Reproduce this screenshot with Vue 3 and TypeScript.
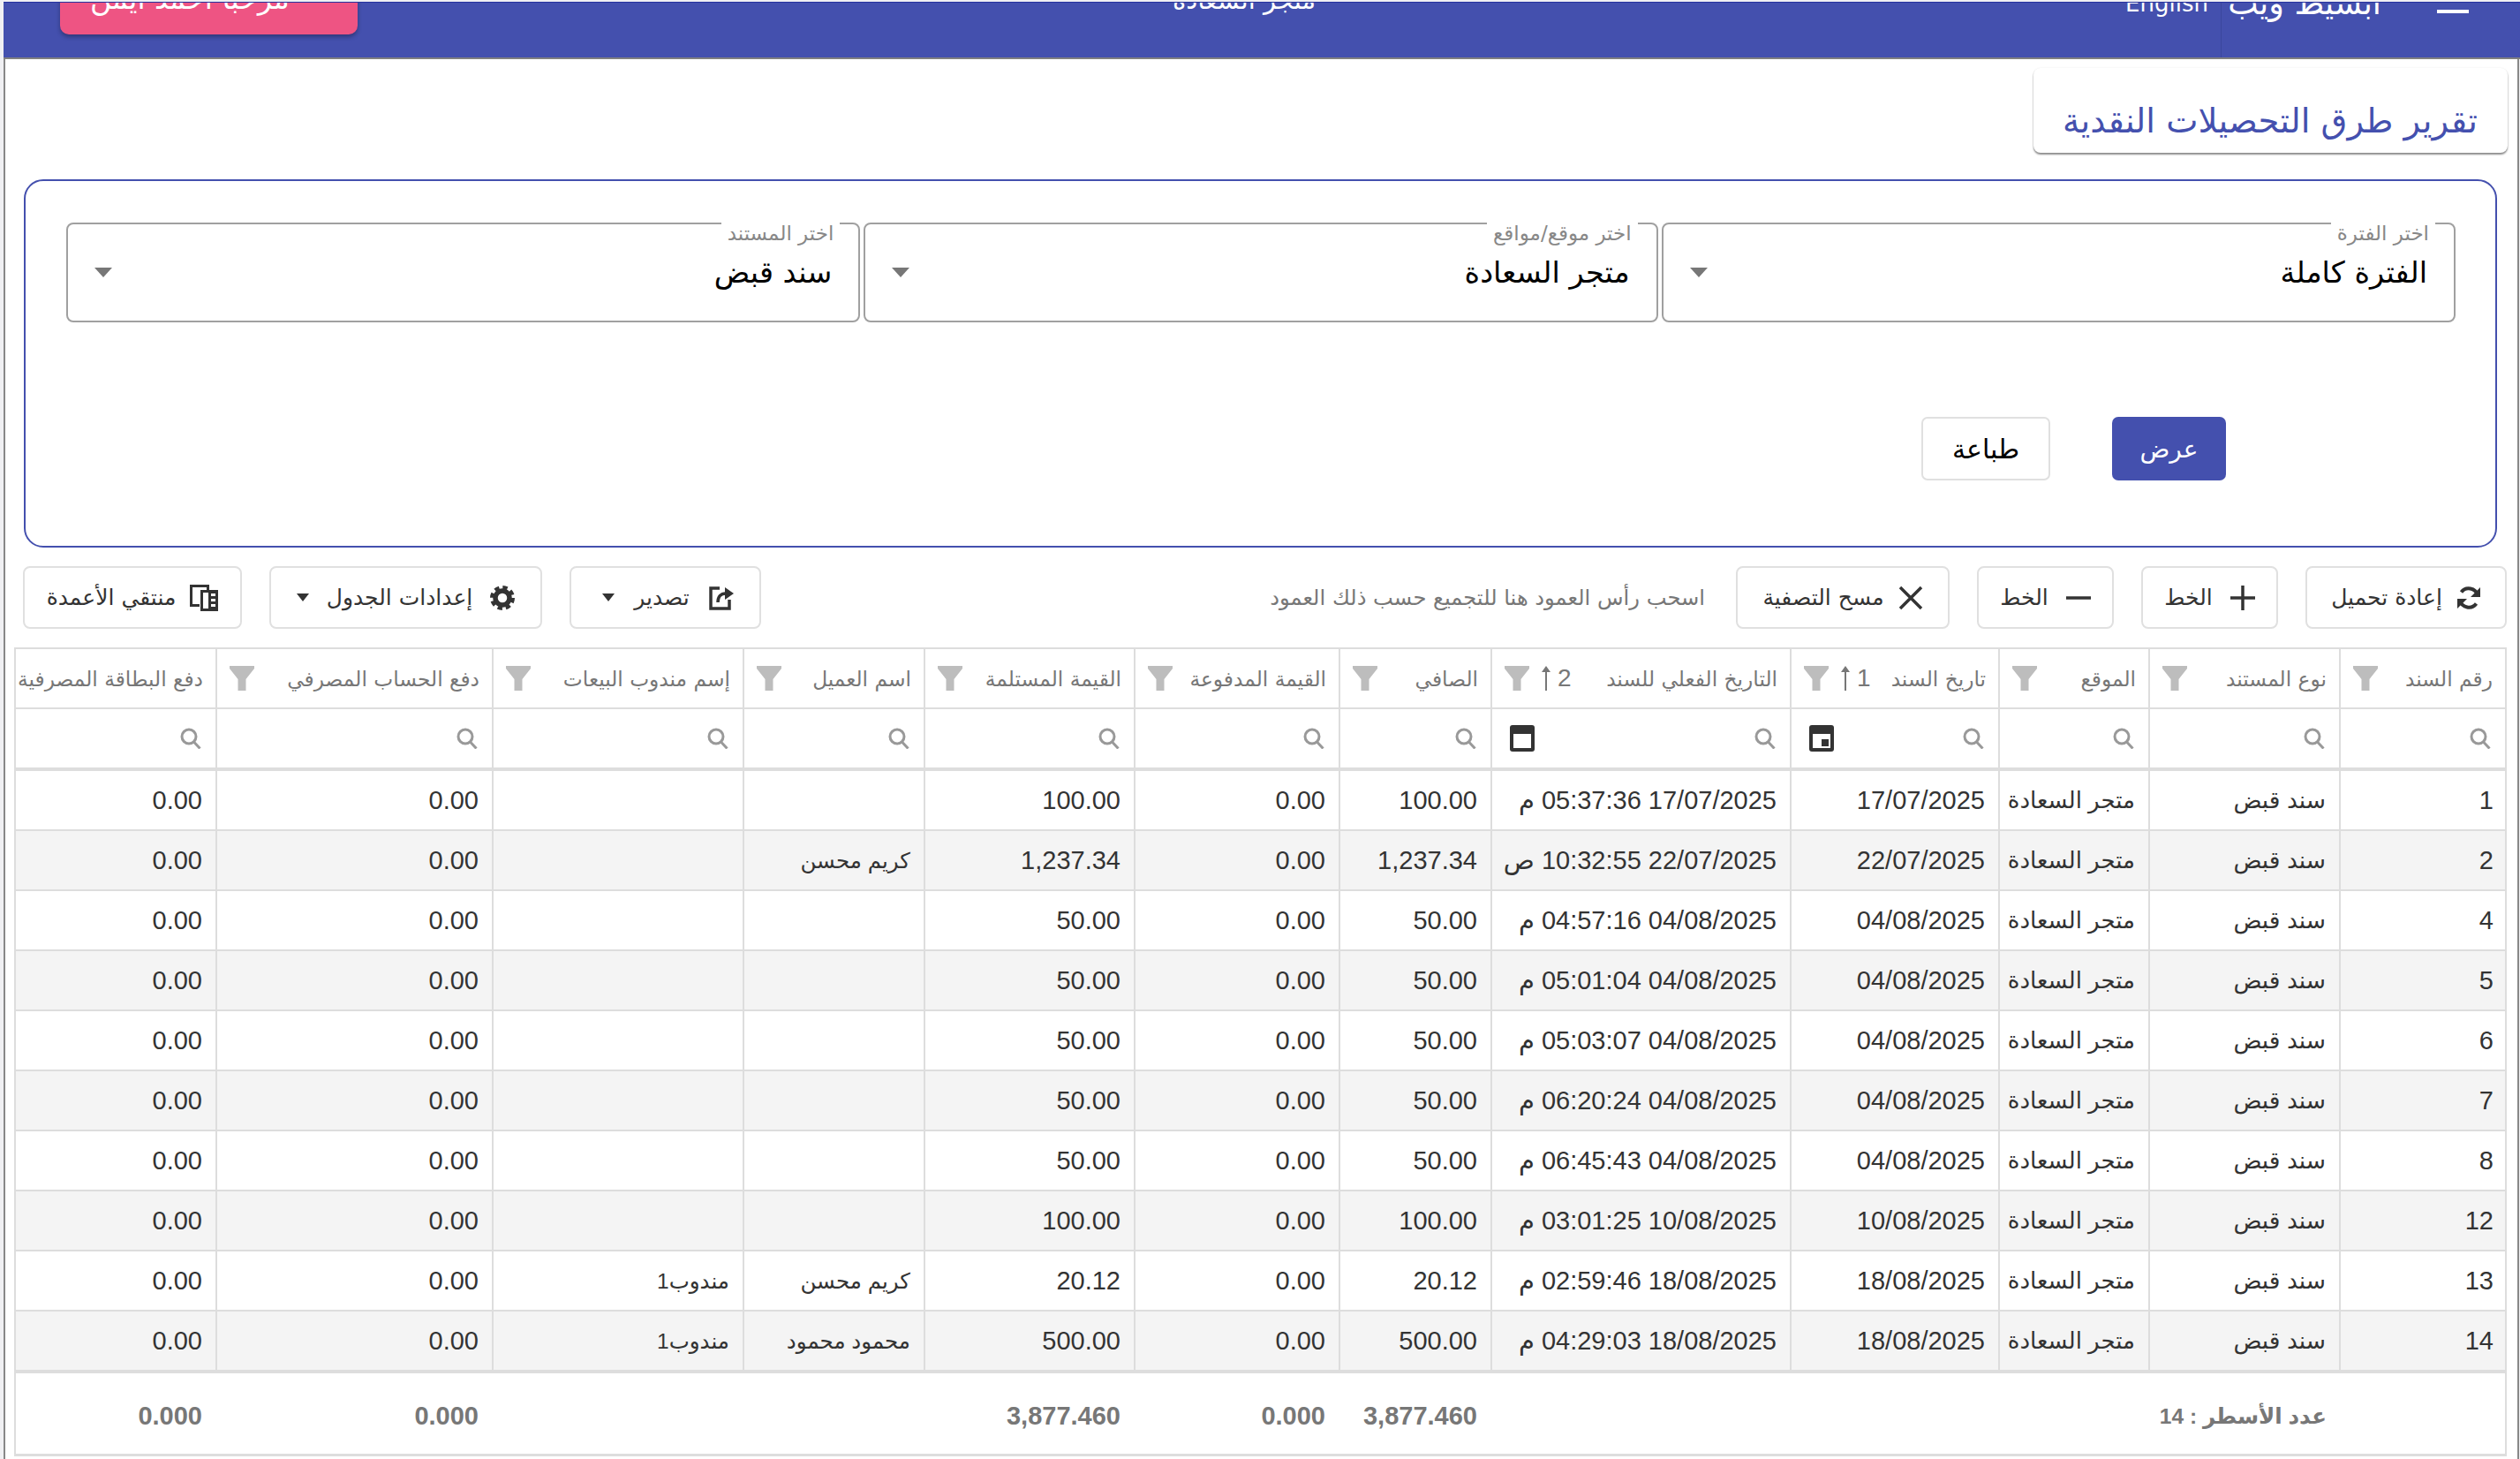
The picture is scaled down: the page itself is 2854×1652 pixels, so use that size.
<template>
  <div class="page">
    <header class="topbar">
      <div class="topbar-inner">
        <div class="burger"><span></span><span></span><span></span></div>
        <div class="brand">ابسيط ويب</div>
        <div class="top-divider"></div>
        <div class="lang">English</div>
        <div class="store">متجر السعادة</div>
        <button class="user-btn">
          <span>مرحبا احمد ايمن</span>
          <i class="user-caret"></i>
        </button>
      </div>
    </header>

    <main class="content">
      <div class="title-card">تقرير طرق التحصيلات النقدية</div>

      <section class="filter-panel">
        <div class="fields">
          <div class="field" v-for="f in fields" :key="f.label">
            <label class="field-label">{{ f.label }}</label>
            <span class="field-value">{{ f.value }}</span>
            <i class="field-caret"></i>
          </div>
        </div>
        <div class="panel-actions">
          <button class="btn-primary">عرض</button>
          <button class="btn-outline">طباعة</button>
        </div>
      </section>

      <div class="toolbar">
        <button class="tool-btn w-reload">
          <svg width="28" height="28" viewBox="0 0 28 28"><path d="M24 11A10.500 10.500 0 0 0 5.500 7.500" fill="none" stroke="#333" stroke-width="4"/><path d="M4 17A10.500 10.500 0 0 0 22.500 20.500" fill="none" stroke="#333" stroke-width="4"/><path d="M27 2V13H16ZM1 26V15H12Z" fill="#333"/></svg>
          <span>إعادة تحميل</span>
        </button>
        <button class="tool-btn w-line">
          <svg width="28" height="28" viewBox="0 0 28 28"><path d="M14 0V28M0 14H28" stroke="#333" stroke-width="3.500"/></svg>
          <span>الخط</span>
        </button>
        <button class="tool-btn w-line">
          <svg width="28" height="28" viewBox="0 0 28 28"><path d="M0 14H28" stroke="#333" stroke-width="3.500"/></svg>
          <span>الخط</span>
        </button>
        <button class="tool-btn w-clear">
          <svg width="28" height="28" viewBox="0 0 28 28"><path d="M2 2L26 26M26 2L2 26" stroke="#333" stroke-width="3.500"/></svg>
          <span>مسح التصفية</span>
        </button>
        <div class="group-hint">اسحب رأس العمود هنا للتجميع حسب ذلك العمود</div>
        <button class="tool-btn w-export">
          <svg width="28" height="28" viewBox="0 0 28 28"><path d="M12 3H2V26H23V16" fill="none" stroke="#333" stroke-width="3.500"/><path d="M10 19C10 13 13 9 19 9" fill="none" stroke="#333" stroke-width="3.500"/><path d="M18 2L28 9L18 16Z" fill="#333"/></svg>
          <span>تصدير</span>
          <i class="tool-caret"></i>
        </button>
        <button class="tool-btn w-settings">
          <svg width="28" height="28" viewBox="0 0 28 28"><circle cx="14" cy="14" r="8" fill="none" stroke="#333" stroke-width="5.500"/><circle cx="14" cy="14" r="12" fill="none" stroke="#333" stroke-width="4" stroke-dasharray="5.420 4"/></svg>
          <span>إعدادات الجدول</span>
          <i class="tool-caret"></i>
        </button>
        <button class="tool-btn w-columns">
          <svg width="32" height="30" viewBox="0 0 32 30"><path d="M0 0H22V6H19V3H3V22H11V25H0Z" fill="#333"/><path d="M12 6H32V30H12Z" fill="#333"/><path d="M15 9H21V27H15ZM24 10H29V13H24ZM24 16H29V19H24ZM24 22H29V25H24Z" fill="#fff"/></svg>
          <span>منتقي الأعمدة</span>
        </button>
      </div>

      <div class="grid-wrap">
        <table class="grid">
          <colgroup>
            <col v-for="c in columns" :key="c.title" :class="c.key" />
          </colgroup>
          <thead>
            <tr class="head-row">
              <th v-for="c in columns" :key="c.title">
                <div class="head-cell">
                  <span class="head-title">{{ c.title }}</span>
                  <span class="head-sort" v-if="c.sort">
                    <span>{{ c.sort }}</span>
                    <svg width="10" height="28" viewBox="0 0 10 28"><path d="M5 0L10 7H6V28H4V7H0Z" fill="#777"/></svg>
                  </span>
                  <svg class="funnel" width="28" height="28" viewBox="0 0 28 28"><path d="M0 0H28V3L18.500 15V28H9.500V15L0 3Z" fill="#bdbdbd"/></svg>
                </div>
              </th>
            </tr>
            <tr class="filter-row">
              <th v-for="c in columns" :key="c.title">
                <div class="filter-cell">
                  <svg width="24" height="24" viewBox="0 0 24 24"><circle cx="10" cy="10" r="8" fill="none" stroke="#999" stroke-width="3"/><path d="M15.500 16L22.500 23.500" stroke="#999" stroke-width="3"/></svg>
                  <svg v-if="c.calendar" class="calendar" width="28" height="30" viewBox="0 0 28 30">
                    <path d="M3 0H25Q28 0 28 3V27Q28 30 25 30H3Q0 30 0 27V3Q0 0 3 0Z" fill="#333"/>
                    <path d="M4 10H24V26H4Z" fill="#fff"/>
                    <path v-if="c.calendar === 'day'" d="M14 16H22V24H14Z" fill="#333"/>
                  </svg>
                </div>
              </th>
            </tr>
          </thead>
          <tbody>
            <tr v-for="r in rows" :key="r.id" class="data-row">
              <td class="first">{{ r.id }}</td>
              <td class="ar-doc">سند قبض</td>
              <td class="ar-loc">متجر السعادة</td>
              <td>{{ r.date }}</td>
              <td>{{ r.date }} {{ r.time }}</td>
              <td>{{ r.net }}</td>
              <td>0.00</td>
              <td>{{ r.net }}</td>
              <td class="ar-name">{{ r.customer }}</td>
              <td class="ar-name">{{ r.agent }}</td>
              <td>0.00</td>
              <td>0.00</td>
            </tr>
          </tbody>
          <tfoot>
            <tr class="foot-row">
              <td></td>
              <td colspan="4" class="foot-count">عدد الأسطر : 14</td>
              <td>3,877.460</td>
              <td>0.000</td>
              <td>3,877.460</td>
              <td></td>
              <td></td>
              <td>0.000</td>
              <td>0.000</td>
            </tr>
          </tfoot>
        </table>
      </div>
    </main>
  </div>
</template>

<script setup lang="ts">
interface Column {
  key: string
  title: string
  sort?: number
  calendar?: 'day' | 'blank'
}

interface Row {
  id: number
  date: string
  time: string
  net: string
  customer: string
  agent: string
}

const fields = [
  { label: 'اختر الفترة', value: 'الفترة كاملة' },
  { label: 'اختر موقع/مواقع', value: 'متجر السعادة' },
  { label: 'اختر المستند', value: 'سند قبض' }
]

const columns: Column[] = [
  { key: 'c1', title: 'رقم السند' },
  { key: 'c2', title: 'نوع المستند' },
  { key: 'c3', title: 'الموقع' },
  { key: 'c4', title: 'تاريخ السند', sort: 1, calendar: 'day' },
  { key: 'c5', title: 'التاريخ الفعلي للسند', sort: 2, calendar: 'blank' },
  { key: 'c6', title: 'الصافي' },
  { key: 'c7', title: 'القيمة المدفوعة' },
  { key: 'c8', title: 'القيمة المستلمة' },
  { key: 'c9', title: 'اسم العميل' },
  { key: 'c10', title: 'إسم مندوب البيعات' },
  { key: 'c11', title: 'دفع الحساب المصرفي' },
  { key: 'c12', title: 'دفع البطاقة المصرفية' }
]

const rows: Row[] = [
  { id: 1, date: '17/07/2025', time: '05:37:36 م', net: '100.00', customer: '', agent: '' },
  { id: 2, date: '22/07/2025', time: '10:32:55 ص', net: '1,237.34', customer: 'كريم محسن', agent: '' },
  { id: 4, date: '04/08/2025', time: '04:57:16 م', net: '50.00', customer: '', agent: '' },
  { id: 5, date: '04/08/2025', time: '05:01:04 م', net: '50.00', customer: '', agent: '' },
  { id: 6, date: '04/08/2025', time: '05:03:07 م', net: '50.00', customer: '', agent: '' },
  { id: 7, date: '04/08/2025', time: '06:20:24 م', net: '50.00', customer: '', agent: '' },
  { id: 8, date: '04/08/2025', time: '06:45:43 م', net: '50.00', customer: '', agent: '' },
  { id: 12, date: '10/08/2025', time: '03:01:25 م', net: '100.00', customer: '', agent: '' },
  { id: 13, date: '18/08/2025', time: '02:59:46 م', net: '20.12', customer: 'كريم محسن', agent: 'مندوب1' },
  { id: 14, date: '18/08/2025', time: '04:29:03 م', net: '500.00', customer: 'محمود محمود', agent: 'مندوب1' }
]
</script>

<style>
html,
body {
  margin: 0;
  background: #fff;
  overflow: hidden;
}
</style>

<style scoped>
.page {
  width: 2854px;
  height: 1652px;
  overflow: hidden;
  direction: rtl;
  background: #f0f0f3;
  font-family: "Liberation Sans", "DejaVu Sans", sans-serif;
  color: #333;
}

.topbar {
  height: 62px;
  margin-left: 4px;
  margin-top: 2px;
  background: #4450ae;
  border-top: 1px solid #2632a0;
  border-bottom: 2px solid #808080;
  overflow: hidden;
  color: #fff;
  font-family: "DejaVu Sans", sans-serif;
}

.topbar-inner {
  display: flex;
  align-items: stretch;
  height: 92px;
  margin-top: -30px;
}

.burger {
  display: flex;
  flex-direction: column;
  gap: 10px;
  width: 36px;
  margin-right: 58px;
  justify-content: flex-end;
  padding-bottom: 50px;
}

.burger span {
  height: 4px;
  background: #fff;
}

.brand {
  margin-right: 63px;
  width: 168px;
  font-size: 36.500px;
  line-height: 62px;
  white-space: nowrap;
}

.top-divider {
  width: 1px;
  margin-right: 13px;
  background: #3b479c;
}

.lang {
  margin-right: 14px;
  width: 90px;
  font-size: 26px;
  line-height: 62px;
}

.store {
  margin-right: 921px;
  width: 164px;
  font-size: 29px;
  line-height: 54px;
  white-space: nowrap;
}

.user-btn {
  display: flex;
  justify-content: space-between;
  width: 337px;
  height: 66px;
  margin-right: auto;
  margin-left: 64px;
  padding: 6px 36px 0 34px;
  border: 0;
  border-radius: 0 0 10px 10px;
  background: #ee5483;
  box-shadow: 0 3px 5px rgba(0, 0, 0, 0.3);
  color: #fff;
  font: 33px "DejaVu Sans", sans-serif;
  direction: ltr;
}

.user-btn span {
  direction: rtl;
  white-space: nowrap;
}

.user-caret {
  width: 0;
  height: 0;
  margin-top: 15px;
  border: 7px solid transparent;
  border-top: 9px solid #fff;
}

.content {
  height: 1586px;
  margin: 0 1px 0 4px;
  border-left: 2px solid #888;
  border-right: 2px solid #888;
  background: #fff;
  overflow: hidden;
}

.title-card {
  width: 537px;
  height: 96px;
  box-sizing: border-box;
  margin: 10px 11px 0 0;
  padding: 36px 34px 0 0;
  border-radius: 8px;
  background: #fff;
  box-shadow: 0 2px 2px rgba(0, 0, 0, 0.45), 0 0 2px rgba(0, 0, 0, 0.08);
  color: #4450ae;
  font: 38.5px/48px "DejaVu Sans", sans-serif;
  white-space: nowrap;
}

.filter-panel {
  height: 417px;
  box-sizing: border-box;
  margin: 30px 23px 0 21px;
  padding: 47px 45px 0 46px;
  border: 2px solid #4450ae;
  border-radius: 22px;
}

.fields {
  display: grid;
  grid-template-columns: repeat(3, 1fr);
  gap: 4px;
}

.field {
  position: relative;
  display: flex;
  align-items: center;
  justify-content: space-between;
  height: 113px;
  box-sizing: border-box;
  padding: 0 30px 0 30px;
  border: 2px solid #a0a0a0;
  border-radius: 8px;
}

.field-label {
  position: absolute;
  top: -3px;
  right: 21px;
  padding: 0 7px;
  background: #fff;
  color: #888;
  font: 23px/27px "DejaVu Sans", sans-serif;
}

.field-value {
  color: #000;
  font: 33.500px/40px "DejaVu Sans", sans-serif;
}

.field-caret {
  width: 0;
  height: 0;
  border-left: 10px solid transparent;
  border-right: 10px solid transparent;
  border-top: 11px solid #777;
}

.panel-actions {
  display: flex;
  gap: 70px;
  margin: 107px 260px 0 0;
}

.panel-actions button {
  height: 72px;
  border-radius: 7px;
  font: 28px "DejaVu Sans", sans-serif;
}

.btn-primary {
  width: 129px;
  border: 0;
  background: #4450ae;
  color: #fff;
}

.panel-actions .btn-outline {
  width: 146px;
  border: 2px solid #e0e0e0;
  background: #fff;
  color: #000;
  font-size: 30px;
}

.toolbar {
  display: flex;
  align-items: center;
  gap: 31px;
  height: 71px;
  margin: 21px 12px 0 20px;
}

.tool-btn {
  display: flex;
  align-items: center;
  justify-content: center;
  gap: 16px;
  height: 71px;
  box-sizing: border-box;
  padding: 0;
  border: 2px solid #e0e0e0;
  border-radius: 8px;
  background: #fff;
  color: #333;
  font: 25px "DejaVu Sans", sans-serif;
  white-space: nowrap;
  flex: none;
}

.w-reload { width: 228px; }
.w-line { width: 155px; gap: 20px; }
.w-clear { width: 242px; }
.w-export { width: 217px; margin-right: auto; gap: 22px; padding-left: 6px; }
.w-settings { width: 309px; gap: 20px; }
.w-columns { width: 248px; }

.group-hint {
  margin-right: 4px;
  color: #777;
  font: 24.2px "DejaVu Sans", sans-serif;
  white-space: nowrap;
}

.tool-caret {
  width: 0;
  height: 0;
  border-left: 7px solid transparent;
  border-right: 7px solid transparent;
  border-top: 9px solid #333;
}

.grid-wrap {
  margin: 21px 12px 0 10px;
}

.grid {
  width: 2823px;
  table-layout: fixed;
  border-collapse: separate;
  border-spacing: 0;
  border-top: 2px solid #ddd;
  border-right: 2px solid #ddd;
  border-left: 2px solid #ddd;
  font-size: 29px;
}

.c1 { width: 188px; }
.c2 { width: 216px; }
.c3 { width: 170px; }
.c4 { width: 236px; }
.c5 { width: 339px; }
.c6 { width: 172px; }
.c7 { width: 232px; }
.c8 { width: 238px; }
.c9 { width: 205px; }
.c10 { width: 284px; }
.c11 { width: 313px; }
.c12 { width: 226px; }

.grid th,
.grid td {
  padding: 0 15px;
  box-sizing: border-box;
  border-left: 2px solid #ddd;
  border-bottom: 2px solid #ddd;
  font-weight: 400;
  text-align: right;
  white-space: nowrap;
  overflow: hidden;
}

.grid th:last-child,
.grid td:last-child {
  border-left: 0;
}

.head-row th {
  height: 68px;
  padding: 0 14px 0 14px;
}

.head-cell {
  display: flex;
  align-items: center;
  gap: 14px;
  color: #777;
  font: 23.300px "DejaVu Sans", sans-serif;
}

.head-title {
  white-space: nowrap;
}

.head-sort {
  display: flex;
  align-items: center;
  gap: 8px;
  margin-right: auto;
  font: 28px "Liberation Sans", sans-serif;
}

.funnel {
  flex: none;
  margin-right: auto;
}

.head-sort + .funnel {
  margin-right: 0;
}

.filter-row th {
  height: 70px;
  border-bottom-width: 4px;
  padding: 0 16px 0 20px;
}

.filter-cell {
  display: flex;
  align-items: center;
  justify-content: space-between;
}

.data-row td {
  height: 68px;
  color: #333;
}

.data-row:nth-child(even) td {
  background: #f4f4f4;
}

.grid .first {
  padding-right: 13px;
}

.grid .ar-doc {
  font-size: 26.500px;
}

.grid .ar-loc {
  font-size: 26px;
}

.grid .ar-name {
  font-size: 24.500px;
}

.foot-row td {
  height: 96px;
  padding-top: 5px;
  border-top: 2px solid #ddd;
  border-left: 0;
  border-bottom-width: 3px;
  color: #777;
  font-weight: 700;
}

.grid .foot-count {
  padding-right: 14px;
  font-size: 24.500px;
}
</style>
